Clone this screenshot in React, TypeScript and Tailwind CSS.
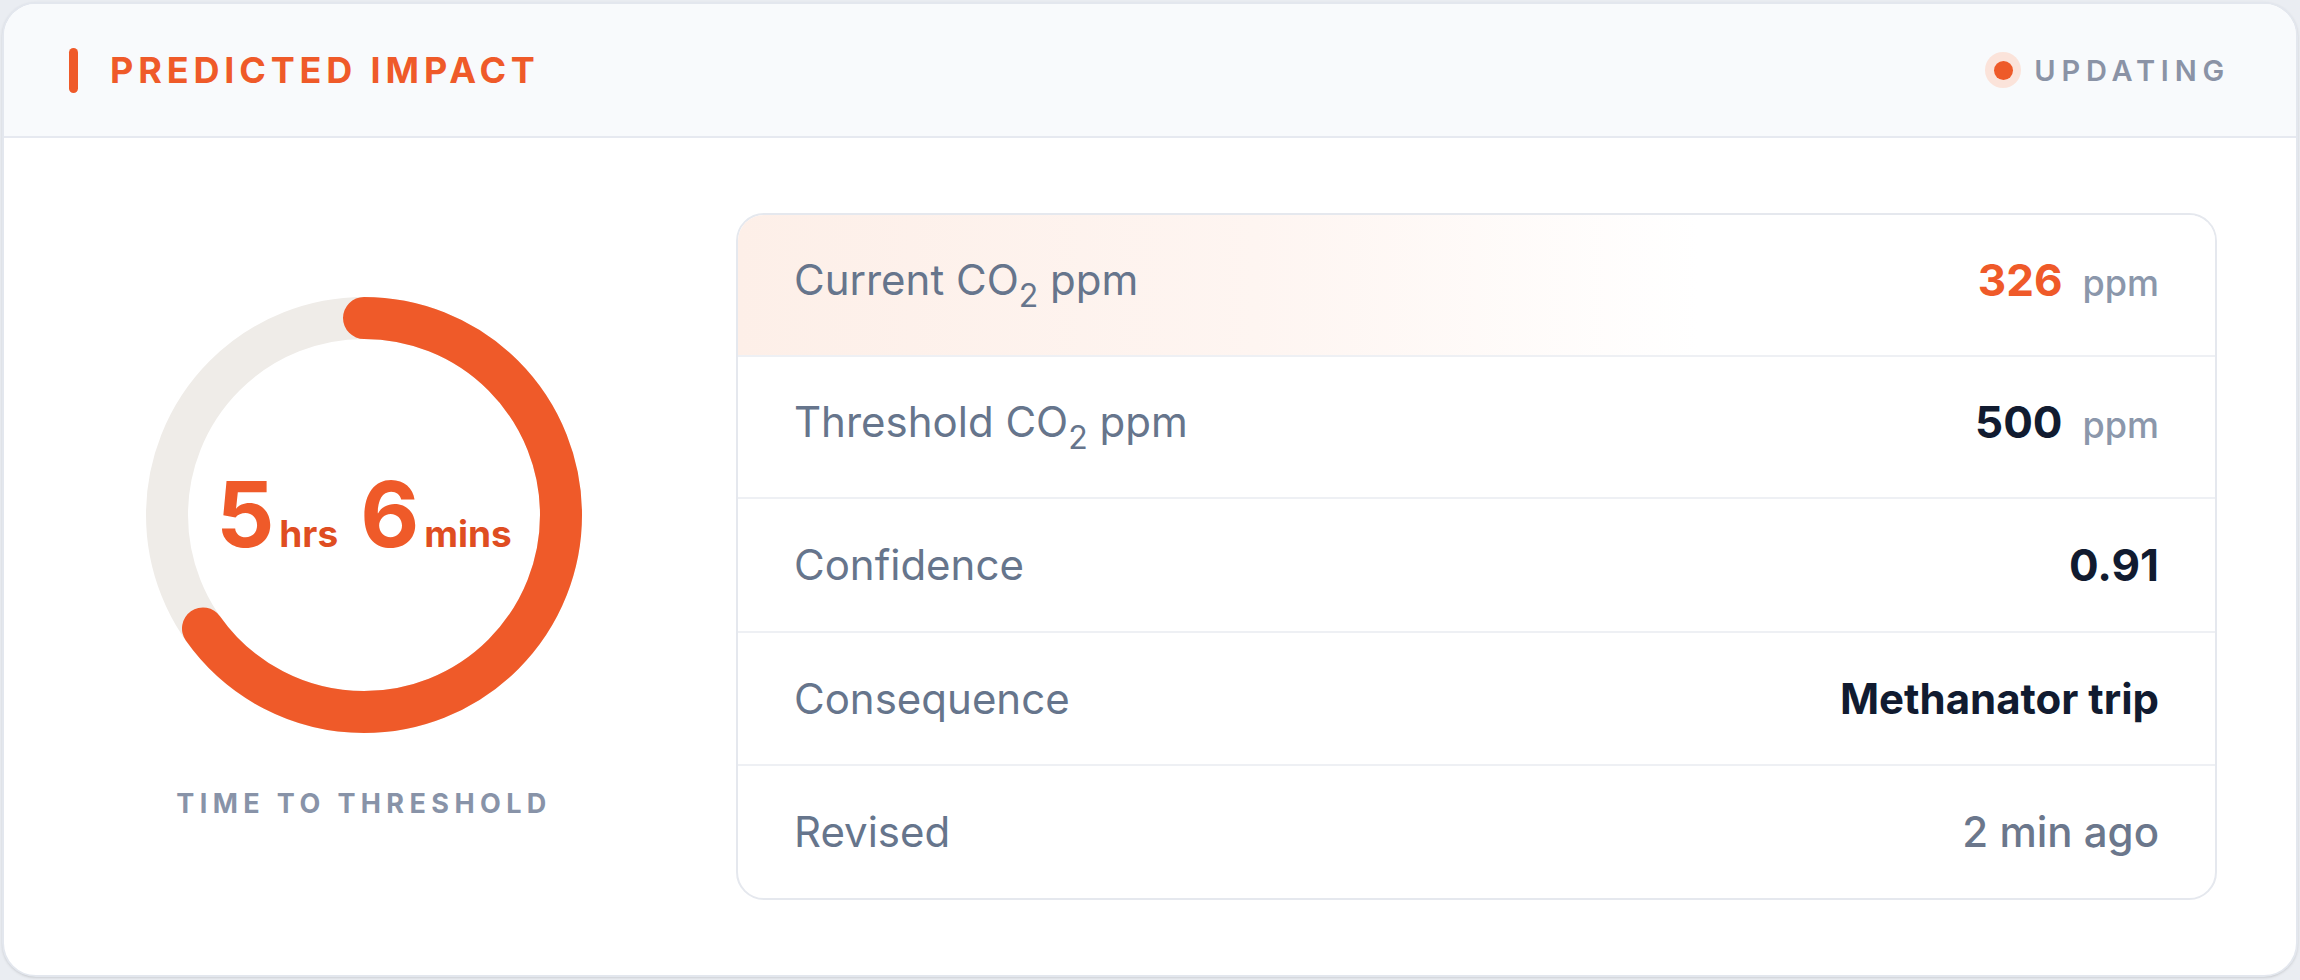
import React from "react";

const ORANGE = "#ef5a29";

function Ring({ fraction }: { fraction: number }) {
  const size = 436;
  const stroke = 42;
  const r = (size - stroke) / 2;
  const c = 2 * Math.PI * r;
  return (
    <svg width={size} height={size} viewBox={`0 0 ${size} ${size}`} className="absolute inset-0 -rotate-90">
      <circle cx={size / 2} cy={size / 2} r={r} fill="none" stroke="#efece8" strokeWidth={stroke} />
      <circle
        cx={size / 2}
        cy={size / 2}
        r={r}
        fill="none"
        stroke={ORANGE}
        strokeWidth={stroke}
        strokeLinecap="round"
        strokeDasharray={`${c * fraction} ${c}`}
      />
    </svg>
  );
}

function Co2({ prefix }: { prefix: string }) {
  return (
    <span>
      {prefix} CO<sub className="text-[32px] bottom-[-12px]">2</sub> ppm
    </span>
  );
}

function Ppm({ value, accent }: { value: string; accent?: boolean }) {
  return (
    <span className="flex items-baseline gap-[20px]">
      <span className={accent ? "text-[44px] font-bold text-[#ef5a29]" : "text-[44px] font-bold text-[#111b30]"}>{value}</span>
      <span className="text-[36px] font-medium text-[#8b97ab]">ppm</span>
    </span>
  );
}

export default function App() {
  return (
    <div className="min-h-screen bg-[#eaedf2] p-[2px] font-['Inter',sans-serif]">
      <div className="flex h-[975px] flex-col overflow-hidden rounded-[34px] border-2 border-[#e3e7ee] bg-white shadow-sm">
        <header className="flex h-[134px] shrink-0 items-center justify-between border-b-2 border-[#e6e9f0] bg-[#f8fafc] pl-[65px] pr-[66px]">
          <div className="flex items-center gap-[32px]">
            <span className="h-[45px] w-[9px] rounded-full bg-[#ef5a29]" />
            <h2 className="text-[36px] font-bold uppercase leading-none tracking-[0.135em] text-[#ef5a29]">Predicted Impact</h2>
          </div>
          <div className="flex items-center gap-[13px]">
            <span className="flex h-[36px] w-[36px] items-center justify-center rounded-full bg-[#fbe3da]">
              <span className="h-[19px] w-[19px] rounded-full bg-[#ee5a29]" />
            </span>
            <span className="text-[29px] font-semibold uppercase leading-none tracking-[0.2em] text-[#8a93a6]">Updating</span>
          </div>
        </header>

        <div className="flex flex-1 items-center gap-[92px] pl-[80px] pr-[79px]">
          <div className="flex w-[560px] shrink-0 flex-col items-center">
            <div className="relative h-[436px] w-[436px]">
              <Ring fraction={0.652} />
              <div className="absolute inset-0 flex items-center justify-center">
                <div className="flex items-baseline font-bold leading-none text-[#ef5a29]">
                  <span className="text-[91px]">5</span>
                  <span className="ml-[5px] text-[37px] text-[#df4d21]">hrs</span>
                  <span className="ml-[22px] text-[91px]">6</span>
                  <span className="ml-[5px] text-[37px] text-[#df4d21]">mins</span>
                </div>
              </div>
            </div>
            <div className="mt-[57px] text-[27px] font-bold uppercase leading-none tracking-[0.2em] text-[#8893a8]">
              Time to threshold
            </div>
          </div>

          <div className="flex h-[687px] flex-1 flex-col overflow-hidden rounded-[28px] border-2 border-[#e5e8ee] text-[42px] leading-none text-[#66758c]">
            <div className="flex h-[142px] items-center justify-between border-b-2 border-[#eef0f4] bg-[linear-gradient(90deg,#fdefe8_0%,#fef5f1_35%,#ffffff_65%)] px-[56px] pb-[10px]">
              <Co2 prefix="Current" />
              <Ppm value="326" accent />
            </div>
            <div className="flex h-[142px] items-center justify-between border-b-2 border-[#eef0f4] px-[56px] pb-[10px]">
              <Co2 prefix="Threshold" />
              <Ppm value="500" />
            </div>
            <div className="flex h-[134px] items-center justify-between border-b-2 border-[#eef0f4] px-[56px]">
              <span>Confidence</span>
              <span className="text-[44px] font-bold text-[#111b30]">0.91</span>
            </div>
            <div className="flex h-[133px] items-center justify-between border-b-2 border-[#eef0f4] px-[56px]">
              <span>Consequence</span>
              <span className="font-bold text-[#111b30]">Methanator trip</span>
            </div>
            <div className="flex flex-1 items-center justify-between px-[56px]">
              <span>Revised</span>
              <span className="font-medium text-[#6b778c]">2 min ago</span>
            </div>
          </div>
        </div>
      </div>
    </div>
  );
}
